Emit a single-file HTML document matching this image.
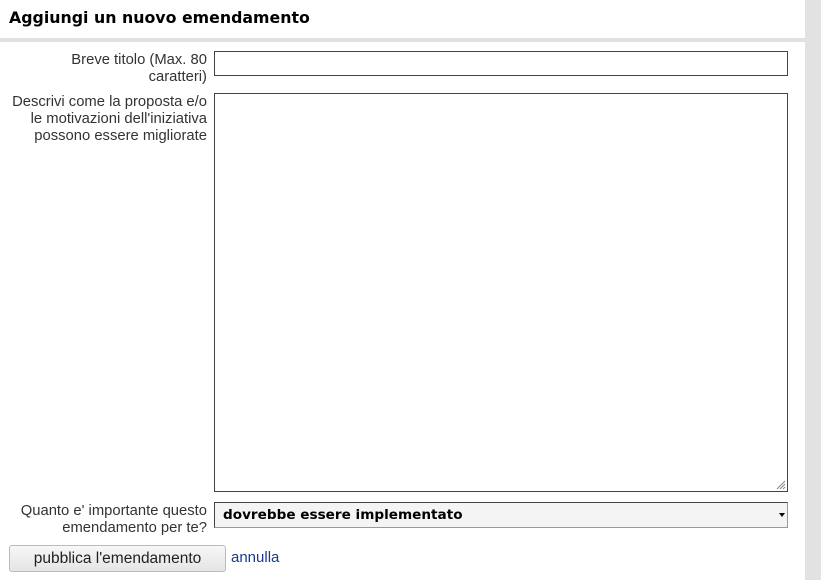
<!DOCTYPE html>
<html><head><style>
body{margin:0;width:821px;height:580px;background:#fff;position:relative;overflow:hidden;font-family:"Liberation Sans",sans-serif;}
.sb{position:absolute;left:805px;top:0;width:16px;height:580px;background:#e2e2e2;}
.h{position:absolute;left:9px;top:8px;font:bold 15.8px "DejaVu Sans",sans-serif;color:#000;}
.line{position:absolute;left:0;top:38px;width:805px;height:4px;background:#e0e0e0;}
.lbl{position:absolute;right:614px;text-align:right;font-size:14.8px;line-height:17px;color:#333;white-space:nowrap;}
.box{position:absolute;left:214px;width:572px;border:1px solid #444;background:#fff;}
.sel{position:absolute;left:214px;top:502px;width:572px;height:24px;border:1px solid #444;border-right-color:#999;border-bottom-color:#999;background:#f4f4f4;font:bold 13.6px "DejaVu Sans",sans-serif;line-height:25px;}
.btn{position:absolute;left:9px;top:545px;width:215px;height:25px;border:1px solid #bbb;border-radius:3px;background:linear-gradient(#f7f7f7,#e5e5e5);font-size:15.5px;line-height:25px;text-align:center;color:#222;}
a{position:absolute;left:231px;top:549px;font-size:15px;color:#1a3a8a;text-decoration:none;}
</style></head><body>
<div class="sb"></div>
<div class="h">Aggiungi un nuovo emendamento</div>
<div class="line"></div>
<div class="lbl" style="top:52px">Breve titolo (Max. 80<br>caratteri)</div>
<div class="box" style="top:51px;height:23px"></div>
<div class="lbl" style="top:94px">Descrivi come la proposta e/o<br>le motivazioni dell'iniziativa<br>possono essere migliorate</div>
<div class="box" style="top:93px;height:397px">
<svg style="position:absolute;right:1px;bottom:1px" width="10" height="10"><path d="M9 1L1 9M9 4L4 9M9 7L7 9" stroke="#888" stroke-width="1"/></svg>
</div>
<div class="lbl" style="top:503px">Quanto e' importante questo<br>emendamento per te?</div>
<div class="sel"><span style="margin-left:8px">dovrebbe essere implementato</span>
<svg style="position:absolute;right:2px;top:10px" width="6" height="4"><path d="M0 0H6L3 4Z" fill="#000"/></svg></div>
<div class="btn">pubblica l'emendamento</div>
<a>annulla</a>
</body></html>
